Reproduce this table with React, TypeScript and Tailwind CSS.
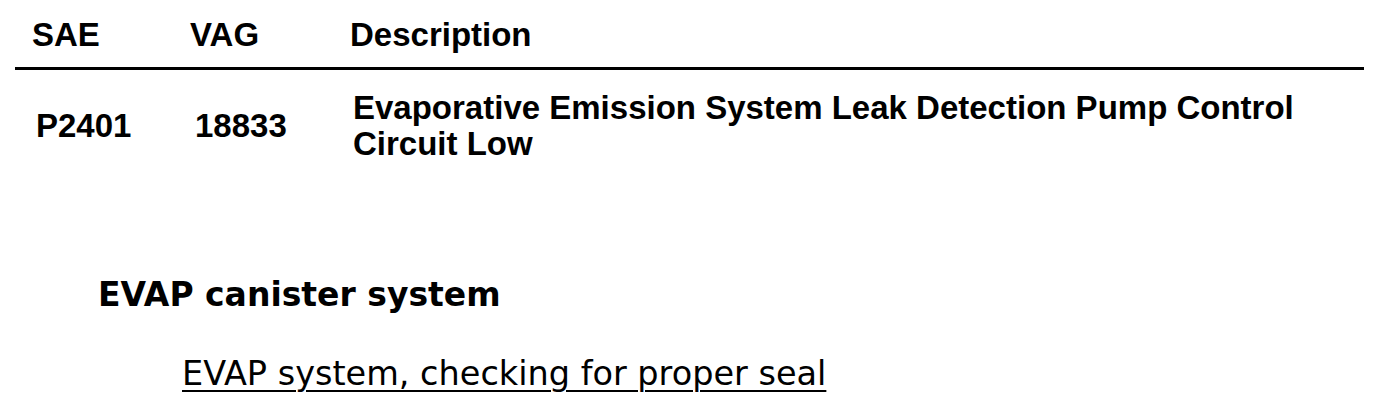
const HEAD_FONT = "font-['Liberation_Sans',Arial,sans-serif]";

export default function App() {
  return (
    <div className="min-h-[410px] bg-white text-black">
      <div className={`ml-[15px] w-[1349px] ${HEAD_FONT} font-bold`}>
        <div className="grid grid-cols-[158px_160px_1fr] pl-[17px] pt-[17px] pb-[14px] border-b-[3px] border-black text-[33px] leading-[36px]">
          <div>SAE</div>
          <div>VAG</div>
          <div>Description</div>
        </div>
        <div className="grid grid-cols-[159px_158px_1fr] items-center pl-[21px] pt-[20px] text-[33px] leading-[36px]">
          <div>P2401</div>
          <div>18833</div>
          <div className="pr-[40px]">
            Evaporative Emission System Leak Detection Pump Control Circuit Low
          </div>
        </div>
      </div>

      <div className="font-['DejaVu_Sans',Verdana,sans-serif]">
        <h2 className="mt-[114px] ml-[98px] text-[33px] leading-[38px] font-bold">
          EVAP canister system
        </h2>
        <div className="mt-[41px] ml-[182px] text-[33.5px] leading-[38px]">
          <a href="#" className="underline underline-offset-[5px] decoration-[2px] text-black">
            EVAP system, checking for proper seal
          </a>
        </div>
      </div>
    </div>
  );
}
